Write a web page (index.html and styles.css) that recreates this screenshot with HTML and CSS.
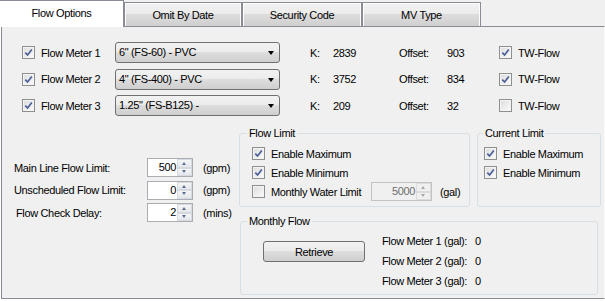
FILE: index.html
```html
<!DOCTYPE html>
<html lang="en">
  <head>
    <meta charset="UTF-8" />
    <title>Flow Options</title>
    <link rel="stylesheet" href="styles.css">
  </head>
  <body>
    <div class="tabctl">
      <div class="tabs">
        <div class="tab active">Flow Options</div>
        <div class="tab tab-omit">Omit By Date</div>
        <div class="tab tab-sec">Security Code</div>
        <div class="tab tab-mv">MV Type</div>
      </div>

      <div class="page">
        <div class="meters">
          <span class="cb checked"><svg viewBox="0 0 9 9"><path d="M1.3 4.6 L3.6 7 L7.8 1.6" /></svg></span>
          <span>Flow Meter 1</span>
          <div class="combo">6" (FS-60) - PVC</div>
          <span>K:</span><span>2839</span>
          <span>Offset:</span><span>903</span>
          <span class="cb checked"><svg viewBox="0 0 9 9"><path d="M1.3 4.6 L3.6 7 L7.8 1.6" /></svg></span>
          <span>TW-Flow</span>

          <span class="cb checked"><svg viewBox="0 0 9 9"><path d="M1.3 4.6 L3.6 7 L7.8 1.6" /></svg></span>
          <span>Flow Meter 2</span>
          <div class="combo">4" (FS-400) - PVC</div>
          <span>K:</span><span>3752</span>
          <span>Offset:</span><span>834</span>
          <span class="cb checked"><svg viewBox="0 0 9 9"><path d="M1.3 4.6 L3.6 7 L7.8 1.6" /></svg></span>
          <span>TW-Flow</span>

          <span class="cb checked"><svg viewBox="0 0 9 9"><path d="M1.3 4.6 L3.6 7 L7.8 1.6" /></svg></span>
          <span>Flow Meter 3</span>
          <div class="combo">1.25" (FS-B125) -</div>
          <span>K:</span><span>209</span>
          <span>Offset:</span><span>32</span>
          <span class="cb"></span>
          <span>TW-Flow</span>
        </div>

        <div class="lower">
          <div class="limits">
            <span>Main Line Flow Limit:</span>
            <div class="spin"><span class="spin-val">500</span><span class="spin-btns"><span class="up"></span><span class="down"></span></span></div>
            <span class="unit">(gpm)</span>

            <span>Unscheduled Flow Limit:</span>
            <div class="spin"><span class="spin-val">0</span><span class="spin-btns"><span class="up"></span><span class="down"></span></span></div>
            <span class="unit">(gpm)</span>

            <span class="indent">Flow Check Delay:</span>
            <div class="spin"><span class="spin-val">2</span><span class="spin-btns"><span class="up"></span><span class="down"></span></span></div>
            <span class="unit">(mins)</span>
          </div>

          <div class="groups">
            <div class="group-row">
              <fieldset class="group flow-limit">
                <legend>Flow Limit</legend>
                <div class="group-body">
                  <div class="check-row">
                    <span class="cb checked"><svg viewBox="0 0 9 9"><path d="M1.3 4.6 L3.6 7 L7.8 1.6" /></svg></span>
                    <span>Enable Maximum</span>
                  </div>
                  <div class="check-row">
                    <span class="cb checked"><svg viewBox="0 0 9 9"><path d="M1.3 4.6 L3.6 7 L7.8 1.6" /></svg></span>
                    <span>Enable Minimum</span>
                  </div>
                  <div class="check-row">
                    <span class="cb"></span>
                    <span class="water-label">Monthly Water Limit</span>
                    <div class="spin disabled"><span class="spin-val">5000</span><span class="spin-btns"><span class="up"></span><span class="down"></span></span></div>
                    <span class="gal">(gal)</span>
                  </div>
                </div>
              </fieldset>

              <fieldset class="group current-limit">
                <legend>Current Limit</legend>
                <div class="group-body">
                  <div class="check-row">
                    <span class="cb checked"><svg viewBox="0 0 9 9"><path d="M1.3 4.6 L3.6 7 L7.8 1.6" /></svg></span>
                    <span>Enable Maximum</span>
                  </div>
                  <div class="check-row">
                    <span class="cb checked"><svg viewBox="0 0 9 9"><path d="M1.3 4.6 L3.6 7 L7.8 1.6" /></svg></span>
                    <span>Enable Minimum</span>
                  </div>
                </div>
              </fieldset>
            </div>

            <fieldset class="group monthly">
              <legend>Monthly Flow</legend>
              <div class="monthly-body">
                <button class="btn">Retrieve</button>
                <div class="counts">
                  <span>Flow Meter 1 (gal):</span><span>0</span>
                  <span>Flow Meter 2 (gal):</span><span>0</span>
                  <span>Flow Meter 3 (gal):</span><span>0</span>
                </div>
              </div>
            </fieldset>
          </div>
        </div>
      </div>
    </div>
  </body>
</html>
```

FILE: styles.css
```css
body {
  margin: 0;
  background: #fff;
  font-family: "Liberation Sans", Arial, sans-serif;
  font-size: 11px;
  letter-spacing: -0.35px;
  color: #000;
}

.tabctl {
  width: 604px;
  margin-left: 1px;
  background: #f0f0f0;
}

.tabs {
  display: flex;
  align-items: flex-end;
  height: 26px;
}

.tab {
  box-sizing: border-box;
  height: 24px;
  border: 1px solid #898c95;
  border-bottom: 0;
  background: linear-gradient(#f2f2f2 0%, #ebebeb 50%, #dddddd 50%, #cfcfcf 100%);
  box-shadow: inset 1px 1px 0 #fcfcfc, inset -1px 0 0 #fcfcfc;
  text-align: center;
  line-height: 24px;
}

.tab.active {
  position: relative;
  z-index: 1;
  width: 125px;
  height: 27px;
  margin-left: -2px;
  margin-bottom: -1px;
  background: #fff;
  box-shadow: none;
  line-height: 24px;
}

.tab-omit {
  width: 118px;
}

.tab-sec {
  width: 120px;
}

.tab-mv {
  width: 119px;
}

.page {
  box-sizing: border-box;
  height: 273px;
  border: 1px solid #898c95;
  border-right-color: #fafafa;
  background: #f0f0f0;
  padding-top: 15px;
}

.meters {
  display: grid;
  grid-template-columns: 19px 74px 195px 23px 66px 48px 52px 19px auto;
  grid-auto-rows: 21px;
  row-gap: 5.5px;
  align-items: center;
  padding-left: 20px;
}

.cb {
  box-sizing: border-box;
  display: inline-flex;
  align-items: center;
  justify-content: center;
  width: 13px;
  height: 13px;
  border: 1px solid #8e8f8f;
  background: linear-gradient(135deg, #dcdcdc, #fbfbfb);
  box-shadow: inset 0 0 0 1px #f4f4f4;
  flex: none;
}

.cb svg {
  width: 9px;
  height: 9px;
}

.cb path {
  fill: none;
  stroke: #4a5f97;
  stroke-width: 1.7;
}

.combo {
  box-sizing: border-box;
  width: 165px;
  height: 21px;
  border: 1px solid #707070;
  border-radius: 3px;
  background: linear-gradient(#f2f2f2 0%, #ebebeb 50%, #dddddd 50%, #cfcfcf 100%);
  padding-left: 3px;
  line-height: 19px;
  position: relative;
}

.combo::after {
  content: "";
  position: absolute;
  right: 5px;
  top: 8px;
  border-left: 3.5px solid transparent;
  border-right: 3.5px solid transparent;
  border-top: 4px solid #000;
}

.lower {
  display: flex;
  margin-top: 11px;
  padding-left: 12px;
}

.limits {
  width: 225px;
  padding-top: 31px;
  display: grid;
  grid-template-columns: 133px 46px auto;
  grid-auto-rows: 19px;
  row-gap: 3.5px;
  align-items: center;
  align-content: start;
}

.indent {
  padding-left: 2px;
}

.unit {
  padding-left: 10px;
}

.spin {
  box-sizing: border-box;
  display: flex;
  width: 46px;
  height: 19px;
  border: 1px solid #abadb3;
  background: #fff;
}

.spin-val {
  flex: 1;
  text-align: right;
  padding-right: 1px;
  line-height: 17px;
}

.spin-btns {
  width: 15px;
  display: flex;
  flex-direction: column;
}

.spin-btns span {
  flex: 1;
  position: relative;
  border: 1px solid #d5d9e0;
  background: linear-gradient(#f6f6f6, #e4e6ea);
}

.spin-btns span::after {
  content: "";
  position: absolute;
  left: 4px;
  top: 2px;
  border-left: 2.5px solid transparent;
  border-right: 2.5px solid transparent;
}

.spin-btns .up::after {
  border-bottom: 3px solid #5b6f96;
}

.spin-btns .down::after {
  top: 1px;
  border-top: 3px solid #5b6f96;
}

.spin.disabled {
  width: 61px;
  background: #f0f0f0;
  border-color: #c3c3c3;
  color: #6d6d6d;
}

.spin.disabled .spin-btns span {
  border-color: #dcdcdc;
  background: #f0f0f0;
}

.spin.disabled .up::after {
  border-bottom-color: #a8a8a8;
}

.spin.disabled .down::after {
  border-top-color: #a8a8a8;
}

.groups {
  width: 362px;
}

.group-row {
  display: flex;
  gap: 7px;
}

.group {
  box-sizing: border-box;
  margin: 0;
  min-width: 0;
  padding: 0 0 0 7px;
  border: 1px solid #d5dfe5;
  border-radius: 3px;
}

.group legend {
  padding: 0 2px;
  line-height: 13px;
}

.flow-limit {
  width: 231px;
}

.current-limit {
  width: 124px;
  padding-left: 5px;
}

.group-body {
  display: grid;
  grid-auto-rows: 19px;
  padding: 4px 0 5px 5px;
}

.current-limit .group-body {
  padding-left: 1px;
}

.check-row {
  display: flex;
  align-items: center;
  gap: 6px;
}

.water-label {
  width: 94px;
}

.gal {
  padding-left: 2px;
}

.monthly {
  width: 358px;
  margin-top: 8px;
  margin-left: 1px;
  padding-left: 6px;
}

.monthly-body {
  display: flex;
  align-items: flex-start;
  padding: 3px 0 3px 16px;
}

.btn {
  box-sizing: border-box;
  width: 102px;
  height: 21px;
  margin-top: 10px;
  border: 1px solid #707070;
  border-radius: 3px;
  background: linear-gradient(#f2f2f2 0%, #ebebeb 50%, #dddddd 50%, #cfcfcf 100%);
  font: inherit;
  letter-spacing: inherit;
  color: #000;
  padding: 0;
}

.counts {
  margin-left: 17px;
  display: grid;
  grid-template-columns: 93px auto;
  grid-auto-rows: 20px;
  align-items: center;
}
```
